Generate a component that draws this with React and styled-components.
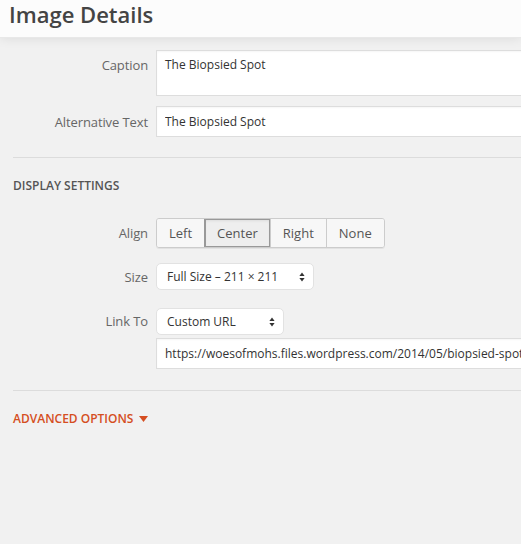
import React from 'react';
import styled, { createGlobalStyle } from 'styled-components';

const GlobalStyle = createGlobalStyle`
  html, body {
    margin: 0;
    padding: 0;
    background: #f1f1f1;
    overflow: hidden;
  }
  body {
    font-family: "Open Sans", "Liberation Sans", sans-serif;
    font-size: 13px;
    color: #444;
  }
`;

const Page = styled.div`
  width: 521px;
  min-height: 544px;
  background: #f1f1f1;
  overflow: hidden;
`;

const Header = styled.header`
  height: 38px;
  background: #fcfcfc;
  padding: 0 9px;
  box-shadow: 0 0 12px rgba(0, 0, 0, 0.1);
  border-bottom: 1px solid #e8e8e8;
  box-sizing: border-box;
`;

const Title = styled.h1`
  margin: 0;
  font-size: 22px;
  font-weight: 600;
  line-height: 29px;
  color: #444;
`;

const Content = styled.div`
  padding: 12px 0 0 13px;
`;

const Row = styled.div`
  display: flex;
  align-items: ${p => (p.$center ? 'center' : 'flex-start')};
  margin-bottom: ${p => p.$gap ?? 10}px;
`;

const Label = styled.label`
  width: 135px;
  flex: none;
  margin-right: 8px;
  text-align: right;
  color: #666;
  line-height: 18px;
  letter-spacing: -0.1px;
  padding-top: ${p => p.$top ?? 0}px;
`;

const Field = styled.div`
  flex: 1;
  margin-right: -20px;
  display: flex;
  flex-direction: column;
  align-items: flex-start;
  gap: 3px;
`;

const TextArea = styled.textarea`
  width: 100%;
  height: 46px;
  box-sizing: border-box;
  resize: none;
  border: 1px solid #ddd;
  background: #fff;
  padding: 5px 8px;
  font: inherit;
  font-size: 12px;
  line-height: 18px;
  color: #333;
  outline: none;
  box-shadow: inset 0 1px 2px rgba(0, 0, 0, 0.04);
`;

const TextInput = styled.input`
  width: 100%;
  height: 31px;
  box-sizing: border-box;
  border: 1px solid #ddd;
  background: #fff;
  padding: 0 8px;
  font: inherit;
  font-size: 12px;
  color: #333;
  outline: none;
  box-shadow: inset 0 1px 2px rgba(0, 0, 0, 0.04);
`;

const Divider = styled.hr`
  margin: ${p => p.$top ?? 20}px 0 0;
  border: 0;
  border-top: 1px solid #dcdcdc;
`;

const SectionTitle = styled.h2`
  margin: 19px 0 23px;
  font-size: 12px;
  font-weight: 600;
  line-height: 18px;
  text-transform: uppercase;
  color: #555;
`;

const ButtonGroup = styled.div`
  display: flex;
  border: 1px solid #ccc;
  border-radius: 3px;
  overflow: hidden;
  box-shadow: 0 1px 0 rgba(0, 0, 0, 0.06);
`;

const GroupButton = styled.button`
  height: 28px;
  padding: 0 12px;
  border: 0;
  border-left: 1px solid ${p => (p.$active ? '#999' : '#ccc')};
  background: ${p => (p.$active ? '#eee' : '#f7f7f7')};
  box-shadow: ${p => (p.$active ? 'inset 0 0 0 1px #999, inset 0 2px 5px -3px rgba(0,0,0,0.3)' : 'none')};
  font: inherit;
  color: #555;
  cursor: pointer;

  &:first-child {
    border-left: 0;
  }
`;

const Select = styled.div`
  width: ${p => p.$width}px;
  height: 27px;
  box-sizing: border-box;
  display: flex;
  align-items: center;
  justify-content: space-between;
  padding: 0 8px 0 10px;
  background: #fff;
  border: 1px solid #e2e2e2;
  border-radius: 5px;
  font-size: 12px;
  color: #333;
  cursor: pointer;
`;

const Arrows = () => (
  <svg width="6" height="10" viewBox="0 0 6 10">
    <path d="M3 0.5 L5.6 4 L0.4 4 Z" fill="#333" />
    <path d="M3 9.5 L5.6 6 L0.4 6 Z" fill="#333" />
  </svg>
);

const Advanced = styled.button`
  margin-top: 19px;
  padding: 0;
  border: 0;
  background: none;
  font: inherit;
  font-size: 12px;
  font-weight: 600;
  line-height: 18px;
  text-transform: uppercase;
  color: #d54e21;
  display: flex;
  align-items: center;
  gap: 6px;
  cursor: pointer;
`;

const Caret = () => (
  <svg width="9" height="6" viewBox="0 0 9 6">
    <path d="M0 0 H9 L4.5 6 Z" fill="#d54e21" />
  </svg>
);

const alignOptions = ['Left', 'Center', 'Right', 'None'];

export default function App() {
  return (
    <Page>
      <GlobalStyle />
      <Header>
        <Title>Image Details</Title>
      </Header>
      <Content>
        <Row>
          <Label $top={6}>Caption</Label>
          <Field>
            <TextArea readOnly defaultValue="The Biopsied Spot" />
          </Field>
        </Row>
        <Row $center>
          <Label>Alternative Text</Label>
          <Field>
            <TextInput readOnly defaultValue="The Biopsied Spot" />
          </Field>
        </Row>
        <Divider $top={20} />
        <SectionTitle>Display Settings</SectionTitle>
        <Row $center $gap={15}>
          <Label>Align</Label>
          <ButtonGroup>
            {alignOptions.map(o => (
              <GroupButton key={o} $active={o === 'Center'}>{o}</GroupButton>
            ))}
          </ButtonGroup>
        </Row>
        <Row $center $gap={18}>
          <Label>Size</Label>
          <Select $width={158}>
            <span>Full Size – 211 × 211</span>
            <Arrows />
          </Select>
        </Row>
        <Row>
          <Label $top={4}>Link To</Label>
          <Field>
            <Select $width={128}>
              <span>Custom URL</span>
              <Arrows />
            </Select>
            <TextInput readOnly defaultValue="https://woesofmohs.files.wordpress.com/2014/05/biopsied-spot.jpg" />
          </Field>
        </Row>
        <Divider $top={21} />
        <Advanced>
          Advanced Options
          <Caret />
        </Advanced>
      </Content>
    </Page>
  );
}
